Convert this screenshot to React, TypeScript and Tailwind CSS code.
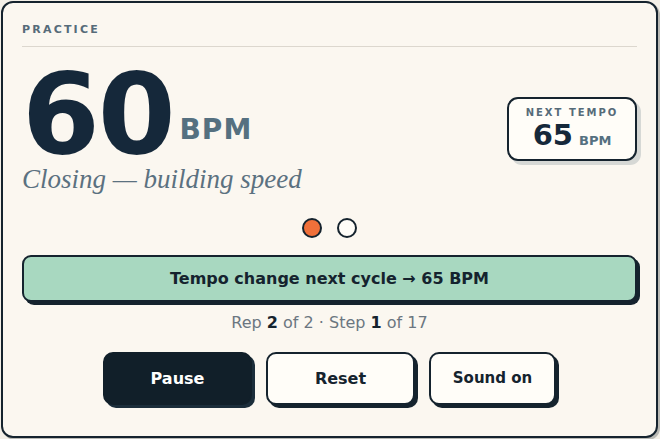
import React from "react";

const sans = "font-['DejaVu_Sans',sans-serif]";

function Dot({ on }: { on?: boolean }) {
  return (
    <span
      className={`block h-[20px] w-[20px] rounded-full border-2 border-[#15232e] ${on ? "bg-[#f0703a]" : "bg-[#fffdf8]"}`}
    />
  );
}

function Btn({ label, dark, small }: { label: string; dark?: boolean; small?: boolean }) {
  return (
    <button
      className={`h-[53px] rounded-[10px] border-2 font-bold ${
        dark
          ? "border-[#111f29] bg-[#111f29] text-white shadow-[3px_3px_0_#1b2d3a]"
          : "border-[#15232e] bg-[#fffdf8] text-[#15232e] shadow-[3px_3px_0_#15232e]"
      } ${small ? "w-[127px] text-[15px]" : "w-[149px] text-[16px]"}`}
    >
      {label}
    </button>
  );
}

export default function App() {
  return (
    <div className={`h-[439px] w-[660px] overflow-hidden bg-[#f3efe7] p-[1px] ${sans}`}>
      <div className="flex h-[437px] w-[657px] flex-col rounded-[12px] border-2 border-[#15232e] bg-[#fbf7f0] px-[19px] pt-[20px] shadow-[2px_2px_0_#b9b9b4]">
        <div className="border-b border-[#dcd7ce] pb-[9px] text-[11px] font-bold leading-[14px] tracking-[0.2em] text-[#566b79]">
          PRACTICE
        </div>

        <div className="mt-[17px] flex items-center justify-between">
          <div className="flex flex-col">
            <div className="flex items-end">
              <span className="text-[112px] font-bold leading-[100px] tracking-[-0.02em] text-[#15283a]">60</span>
              <span className="mb-[18px] ml-[6px] text-[28px] font-bold leading-[32px] tracking-[0.04em] text-[#557080]">
                BPM
              </span>
            </div>
            <div className="font-['Liberation_Serif',serif] text-[27px] italic leading-[30px] text-[#5b7180]">
              Closing — building speed
            </div>
          </div>
          <div className="flex h-[64px] w-[130px] flex-col items-center justify-center rounded-[11px] border-2 border-[#15232e] bg-[#fffdf8] shadow-[4px_4px_0_#d6d8d5]">
            <span className="text-[10px] font-bold leading-[12px] tracking-[0.2em] text-[#566b79]">NEXT TEMPO</span>
            <span className="flex items-baseline">
              <span className="text-[29px] font-bold leading-[32px] text-[#15283a]">65</span>
              <span className="ml-[6px] text-[13px] font-bold text-[#557080]">BPM</span>
            </span>
          </div>
        </div>

        <div className="mt-[24px] flex justify-center gap-[15px]">
          <Dot on />
          <Dot />
        </div>

        <div className="mt-[17px] flex h-[47px] items-center justify-center rounded-[9px] border-2 border-[#15232e] bg-[#a8d8c0] text-[16px] font-bold text-[#15232e] shadow-[3px_3px_0_#15232e]">
          Tempo change next cycle → 65 BPM
        </div>

        <div className="mt-[11px] text-center text-[16px] leading-[20px] text-[#6b7680]">
          Rep <b className="text-[#15232e]">2</b> of 2 · Step <b className="text-[#15232e]">1</b> of 17
        </div>

        <div className="mt-[19px] flex justify-center gap-[14px]">
          <Btn label="Pause" dark />
          <Btn label="Reset" />
          <Btn label="Sound on" small />
        </div>
      </div>
    </div>
  );
}
